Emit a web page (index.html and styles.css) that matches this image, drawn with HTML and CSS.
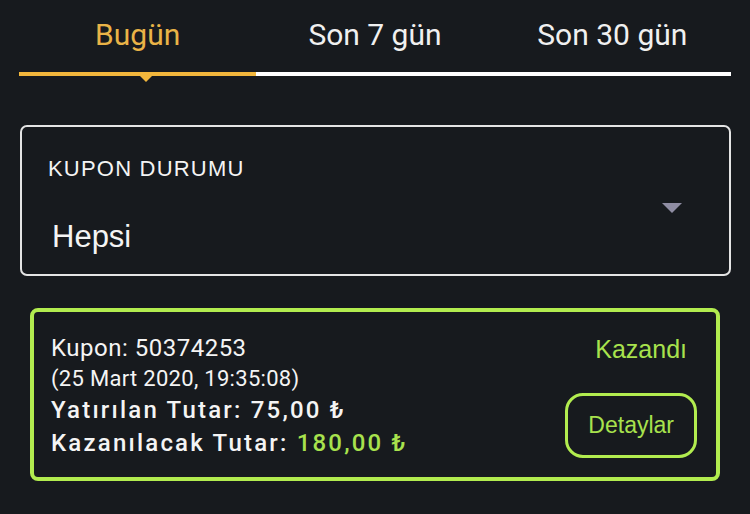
FILE: index.html
```html
<!DOCTYPE html>
<html lang="tr">
<head>
<meta charset="utf-8">
<title>Kuponlarım</title>
<link rel="stylesheet" href="styles.css">
</head>
<body>
<div class="page">
  <nav class="tabs">
    <div class="tab tab-active">Bugün</div>
    <div class="tab">Son 7 gün</div>
    <div class="tab">Son 30 gün</div>
  </nav>

  <div class="select">
    <div class="select-text">
      <div class="select-label">KUPON DURUMU</div>
      <div class="select-value">Hepsi</div>
    </div>
    <span class="select-arrow"></span>
  </div>

  <div class="coupon">
    <div class="coupon-info">
      <div class="line line-id">Kupon: 50374253</div>
      <div class="line line-date">(25 Mart 2020, 19:35:08)</div>
      <div class="line line-amount">Yatırılan Tutar: 75,00 ₺</div>
      <div class="line line-amount">Kazanılacak Tutar: <span class="win">180,00 ₺</span></div>
    </div>
    <div class="coupon-side">
      <div class="status">Kazandı</div>
      <button class="details">Detaylar</button>
    </div>
  </div>
</div>
</body>
</html>
```

FILE: styles.css
```css
html, body {
  margin: 0;
  padding: 0;
  background: #171a1e;
}

body {
  width: 750px;
  height: 514px;
  overflow: hidden;
  font-family: Roboto, "Noto Sans", sans-serif;
  color: #f4f4f4;
}

.page {
  padding: 0 19px;
}

/* Tabs */
.tabs {
  display: grid;
  grid-template-columns: 1fr 1fr 1fr;
}

.tab {
  position: relative;
  height: 70px;
  padding-bottom: 2px;
  line-height: 70px;
  text-align: center;
  font-size: 30px;
  font-weight: 400;
  color: #f0f0f0;
  border-bottom: 4px solid #ffffff;
}

.tab-active {
  color: #e9b347;
  border-bottom-color: #f2b63c;
}

.tab-active::after {
  content: "";
  position: absolute;
  left: 117px;
  top: 100%;
  width: 0;
  height: 0;
  border-left: 10px solid transparent;
  border-right: 10px solid transparent;
  border-top: 10px solid #f2b63c;
}

/* Select */
.select {
  display: flex;
  align-items: center;
  margin: 49px 0 0 1px;
  padding: 29px 0 20px 26px;
  border: 2px solid #e4e4e4;
  border-radius: 7px;
  font-family: "Liberation Sans", Arial, sans-serif;
}

.select-text {
  display: flex;
  flex-direction: column;
}

.select-label {
  font-size: 22px;
  line-height: 26px;
  letter-spacing: 1.2px;
  color: #f4f4f4;
}

.select-value {
  margin: 38px 0 0 4px;
  font-size: 31px;
  line-height: 34px;
  color: #f4f4f4;
}

.select-arrow {
  margin: 5px 47px 0 auto;
  width: 0;
  height: 0;
  border-left: 10px solid transparent;
  border-right: 10px solid transparent;
  border-top: 10px solid #8f8da3;
}

/* Coupon card */
.coupon {
  display: flex;
  justify-content: space-between;
  margin: 32px 11px 0 11px;
  padding: 21px 19px 17px 17px;
  border: 4px solid #b2ec4f;
  border-radius: 8px;
}

.coupon-info {
  display: flex;
  flex-direction: column;
}

.line {
  white-space: nowrap;
}

.line-id {
  font-size: 24px;
  line-height: 31px;
  letter-spacing: 0.5px;
}

.line-date {
  font-size: 22px;
  line-height: 30px;
  letter-spacing: 0.3px;
}

.line-amount {
  font-size: 24px;
  line-height: 33px;
  font-weight: 500;
  letter-spacing: 2.2px;
}

.win {
  color: #a8e24d;
}

.coupon-side {
  display: flex;
  flex-direction: column;
  align-items: flex-end;
  font-family: "Liberation Sans", Arial, sans-serif;
}

.status {
  margin: 1px 10px 0 0;
  font-size: 25px;
  line-height: 30px;
  color: #a8e24d;
}

.details {
  margin-top: 29px;
  height: 65px;
  padding: 0 20px;
  border: 3px solid #b2ec4f;
  border-radius: 18px;
  background: transparent;
  font-family: "Liberation Sans", Arial, sans-serif;
  font-size: 23px;
  line-height: 59px;
  color: #a8e24d;
}
```
